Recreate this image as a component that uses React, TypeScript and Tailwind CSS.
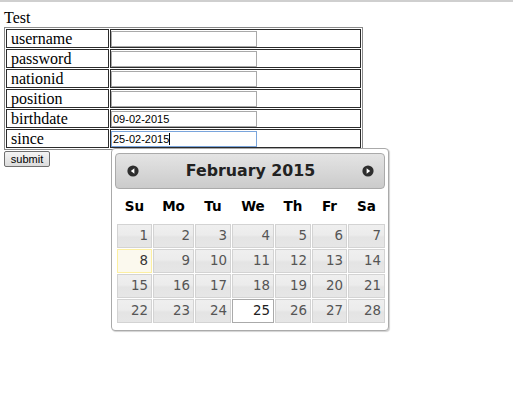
import React from "react";

const fields = [
  { label: "username", value: "" },
  { label: "password", value: "" },
  { label: "nationid", value: "" },
  { label: "position", value: "" },
  { label: "birthdate", value: "09-02-2015" },
];

const dayNames = ["Su", "Mo", "Tu", "We", "Th", "Fr", "Sa"];

const weeks = [
  [1, 2, 3, 4, 5, 6, 7],
  [8, 9, 10, 11, 12, 13, 14],
  [15, 16, 17, 18, 19, 20, 21],
  [22, 23, 24, 25, 26, 27, 28],
];

const TODAY = 8;
const SELECTED = 25;

function CircleArrow({ dir }: { dir: "w" | "e" }) {
  return (
    <svg width="12" height="12" viewBox="0 0 12 12">
      <circle cx="6" cy="6" r="5.6" fill="#2e2e2e" />
      {dir === "w" ? (
        <polygon points="7.4,3.2 3.8,6 7.4,8.8" fill="#fff" />
      ) : (
        <polygon points="4.6,3.2 8.2,6 4.6,8.8" fill="#fff" />
      )}
    </svg>
  );
}

function DayCell({ day }: { day: number }) {
  let cls =
    "border-[#d3d3d3] bg-[linear-gradient(#efefef_0%,#ececec_45%,#e4e4e4_55%,#e6e6e6_100%)] text-[#555]";
  if (day === TODAY) cls = "border-[#fcefa1] bg-[#fbf9ee] text-[#363636]";
  if (day === SELECTED) cls = "border-[#aaaaaa] bg-white text-[#212121]";
  return (
    <div
      className={`h-[24px] border pr-[3px] flex items-center justify-end text-[13.4px] leading-none ${cls}`}
    >
      {day}
    </div>
  );
}

function Datepicker() {
  return (
    <div className="absolute left-[111px] top-[148px] w-[278px] h-[183px] border border-[#aaaaaa] rounded-[4px] bg-white shadow-[1px_1px_1px_rgba(0,0,0,0.18)] pt-[4px] px-[3px] font-['DejaVu_Sans',Verdana,sans-serif]">
      <div className="h-[36px] w-[270px] border border-[#aaaaaa] rounded-[4px] bg-[linear-gradient(#e4e4e4,#cbcbcb)] flex items-center justify-between pl-[11px] pr-[10px]">
        <CircleArrow dir="w" />
        <span className="text-[15.8px] font-bold text-[#222]">February 2015</span>
        <CircleArrow dir="e" />
      </div>
      <div className="ml-[2px] w-[268px]">
        <div className="grid grid-cols-[35px_41px_36px_42px_36px_35px_37px] gap-x-px h-[35px] items-center">
          {dayNames.map((d) => (
            <div key={d} className="text-center text-[13.5px] font-bold text-black">
              {d}
            </div>
          ))}
        </div>
        <div className="grid grid-cols-[35px_41px_36px_42px_36px_35px_37px] gap-px">
          {weeks.flat().map((d) => (
            <DayCell key={d} day={d} />
          ))}
        </div>
      </div>
    </div>
  );
}

export default function App() {
  return (
    <div className="relative w-[513px] h-[397px] bg-white overflow-hidden text-black">
      <div className="h-[2px] bg-[#cfcfcf]" />
      <div className="pt-[7px] pl-[4px] h-[25px] text-[16px] leading-[18px] font-['Liberation_Serif','Times_New_Roman',serif]">
        Test
      </div>

      <table className="ml-[4px] border-separate border-spacing-[1px] border border-[#8a8a8a] font-['Liberation_Serif','Times_New_Roman',serif] text-[16px] leading-[17px]">
        <tbody>
          {fields.map((f) => (
            <tr key={f.label}>
              <td className="w-[103px] border border-[#2b2b2b] p-0 pl-[4px]">{f.label}</td>
              <td className="w-[251px] border border-[#2b2b2b] p-0 align-middle">
                <input
                  readOnly
                  value={f.value}
                  className="block w-[146px] h-[16px] border border-[#a9a9a9] px-[1px] text-[11px] leading-[14px] font-['Liberation_Sans',Arial,sans-serif] outline-none"
                />
              </td>
            </tr>
          ))}
          <tr>
            <td className="w-[103px] border border-[#2b2b2b] p-0 pl-[4px]">since</td>
            <td className="w-[251px] border border-[#2b2b2b] p-0 align-middle">
              <div className="flex items-center w-[146px] h-[16px] border border-[#7aa5dc] px-[1px] text-[11px] leading-[14px] font-['Liberation_Sans',Arial,sans-serif]">
                <span>25-02-2015</span>
                <span className="w-px h-[12px] bg-black" />
              </div>
            </td>
          </tr>
        </tbody>
      </table>

      <button
        type="button"
        className="block ml-[4px] mt-[1px] w-[46px] h-[16px] border border-[#707070] rounded-[2px] bg-[linear-gradient(#f4f4f4,#dcdcdc)] text-[11px] leading-[13px] font-['Liberation_Sans',Arial,sans-serif] text-black"
      >
        submit
      </button>

      <Datepicker />
    </div>
  );
}
